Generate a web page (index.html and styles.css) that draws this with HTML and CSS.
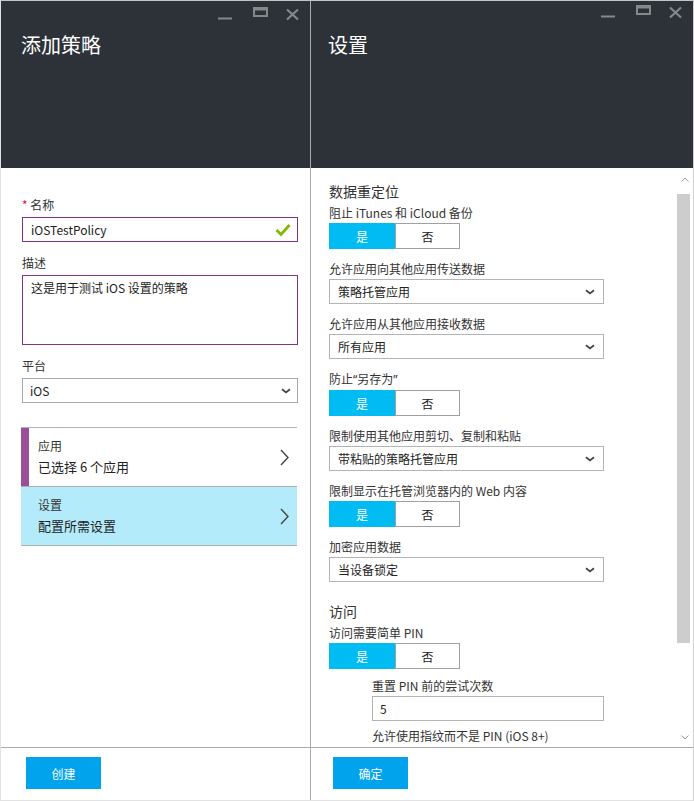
FILE: index.html
```html
<!DOCTYPE html>
<html lang="zh-CN">
<head>
<meta charset="utf-8">
<title>添加策略</title>
<link rel="stylesheet" href="styles.css">
</head>
<body>
<div class="app">
  <section class="panel panel-left">
    <header class="head">
      <div class="ctrls">
        <svg width="82" height="14" viewBox="0 0 82 14">
          <rect x="0" y="10.5" width="14" height="2" fill="#85888c"/>
          <path d="M35 0h15v10h-15z M37 3.5h11v4.5h-11z" fill="#85888c" fill-rule="evenodd"/>
          <path d="M69 2.5L80 12.5M80 2.5L69 12.5" stroke="#85888c" stroke-width="2.2"/>
        </svg>
      </div>
      <h1 class="title">添加策略</h1>
    </header>
    <div class="body-left">
      <div class="lfield">
        <div class="lbl"><span class="req">*</span> 名称</div>
        <div class="inp inp-purple"><span>iOSTestPolicy</span>
          <svg class="check" width="16" height="14" viewBox="0 0 16 14"><path d="M1.5 7L6 11.5L14.5 2" fill="none" stroke="#7fba00" stroke-width="2.8"/></svg>
        </div>
      </div>
      <div class="lfield">
        <div class="lbl">描述</div>
        <div class="inp inp-purple textarea">这是用于测试 iOS 设置的策略</div>
      </div>
      <div class="lfield">
        <div class="lbl">平台</div>
        <div class="inp select-l"><span>iOS</span>
          <svg width="10" height="6" viewBox="0 0 10 6"><path d="M1 1.2L5 4.4L9 1.2" fill="none" stroke="#444" stroke-width="1.8"/></svg>
        </div>
      </div>
      <div class="nav">
        <div class="nav-item">
          <div class="nav-bar"></div>
          <div class="nav-text">
            <div class="nav-lbl">应用</div>
            <div class="nav-val">已选择 6 个应用</div>
          </div>
          <svg class="nav-chev" width="9" height="17" viewBox="0 0 9 17"><path d="M1 1L8 8.5L1 16" fill="none" stroke="#444" stroke-width="1.4"/></svg>
        </div>
        <div class="nav-item nav-active">
          <div class="nav-text nav-text-plain">
            <div class="nav-lbl">设置</div>
            <div class="nav-val">配置所需设置</div>
          </div>
          <svg class="nav-chev" width="9" height="17" viewBox="0 0 9 17"><path d="M1 1L8 8.5L1 16" fill="none" stroke="#444" stroke-width="1.4"/></svg>
        </div>
      </div>
    </div>
    <footer class="foot foot-left"><button class="btn">创建</button></footer>
  </section>

  <section class="panel panel-right">
    <header class="head head-right">
      <div class="ctrls">
        <svg width="82" height="14" viewBox="0 0 82 14">
          <rect x="0" y="10.5" width="14" height="2" fill="#85888c"/>
          <path d="M35 0h15v10h-15z M37 3.5h11v4.5h-11z" fill="#85888c" fill-rule="evenodd"/>
          <path d="M69 2.5L80 12.5M80 2.5L69 12.5" stroke="#85888c" stroke-width="2.2"/>
        </svg>
      </div>
      <h1 class="title">设置</h1>
    </header>
    <div class="body-right">
      <div class="content">
        <h2 class="sec">数据重定位</h2>
        <div class="rf">
          <div class="lbl">阻止 iTunes 和 iCloud 备份</div>
          <div class="toggle"><span class="on">是</span><span class="off">否</span></div>
        </div>
        <div class="rf">
          <div class="lbl">允许应用向其他应用传送数据</div>
          <div class="sel"><span>策略托管应用</span><svg width="10" height="6" viewBox="0 0 10 6"><path d="M1 1.2L5 4.4L9 1.2" fill="none" stroke="#444" stroke-width="1.8"/></svg></div>
        </div>
        <div class="rf">
          <div class="lbl">允许应用从其他应用接收数据</div>
          <div class="sel"><span>所有应用</span><svg width="10" height="6" viewBox="0 0 10 6"><path d="M1 1.2L5 4.4L9 1.2" fill="none" stroke="#444" stroke-width="1.8"/></svg></div>
        </div>
        <div class="rf rf-gap">
          <div class="lbl">防止<span class="q">“</span>另存为<span class="q">”</span></div>
          <div class="toggle"><span class="on">是</span><span class="off">否</span></div>
        </div>
        <div class="rf">
          <div class="lbl">限制使用其他应用剪切、复制和粘贴</div>
          <div class="sel"><span>带粘贴的策略托管应用</span><svg width="10" height="6" viewBox="0 0 10 6"><path d="M1 1.2L5 4.4L9 1.2" fill="none" stroke="#444" stroke-width="1.8"/></svg></div>
        </div>
        <div class="rf">
          <div class="lbl">限制显示在托管浏览器内的 Web 内容</div>
          <div class="toggle"><span class="on">是</span><span class="off">否</span></div>
        </div>
        <div class="rf">
          <div class="lbl">加密应用数据</div>
          <div class="sel"><span>当设备锁定</span><svg width="10" height="6" viewBox="0 0 10 6"><path d="M1 1.2L5 4.4L9 1.2" fill="none" stroke="#444" stroke-width="1.8"/></svg></div>
        </div>
        <h2 class="sec sec-gap">访问</h2>
        <div class="rf">
          <div class="lbl">访问需要简单 PIN</div>
          <div class="toggle"><span class="on">是</span><span class="off">否</span></div>
        </div>
        <div class="rf sub sub-tight">
          <div class="lbl">重置 PIN 前的尝试次数</div>
          <div class="sel sel-sub"><span>5</span></div>
        </div>
        <div class="rf sub">
          <div class="lbl">允许使用指纹而不是 PIN (iOS 8+)</div>
        </div>
      </div>
      <div class="scrollbar">
        <div class="sb-up"><svg width="8" height="5" viewBox="0 0 8 5"><path d="M0.5 4.5L4 1L7.5 4.5" fill="none" stroke="#9a9a9a" stroke-width="1"/></svg></div>
        <div class="sb-thumb"></div>
        <div class="sb-track"></div>
        <div class="sb-down"><svg width="8" height="5" viewBox="0 0 8 5"><path d="M0.5 0.5L4 4L7.5 0.5" fill="none" stroke="#9a9a9a" stroke-width="1"/></svg></div>
      </div>
    </div>
    <footer class="foot foot-right"><button class="btn">确定</button></footer>
  </section>
</div>
</body>
</html>
```
FILE: styles.css
```css
* { box-sizing: border-box; }
html, body { margin: 0; padding: 0; background: #fff; }
body { font-family: "Noto Sans CJK SC", "Noto Sans", sans-serif; color: #333; }

.app {
  display: flex;
  width: 694px;
  height: 801px;
  border-top: 1px solid #c4c4c4;
  border-left: 1px solid #e2e2e2;
  border-right: 1px solid #d0d0d0;
  border-bottom: 1px solid #e2e2e2;
  overflow: hidden;
}

.panel { display: flex; flex-direction: column; height: 100%; }
.panel-left { width: 310px; flex: none; border-right: 1px solid #ababab; }
.panel-right { flex: 1; min-width: 0; }

.head {
  height: 167px;
  flex: none;
  background: #2d3239;
  padding: 6px 10px 0 20px;
}
.head-right { padding: 4px 10px 0 17px; }
.ctrls { display: flex; justify-content: flex-end; height: 14px; }
.ctrls svg { display: block; }
.title {
  margin: 11px 0 0;
  font-size: 20px;
  line-height: 26px;
  font-weight: normal;
  color: #fff;
}
.head-right .title { margin-top: 13px; }

/* left body */
.body-left { flex: 1; min-height: 0; overflow: hidden; padding: 29px 12px 0 21px; }
.lfield { margin-bottom: 13px; }
.lbl { font-size: 12px; line-height: 16px; color: #333; margin-bottom: 4px; white-space: nowrap; }
.req { color: #e81123; }
.q { font-family: "Noto Sans", sans-serif; }
.inp {
  height: 25px;
  border: 1px solid #a8a8a8;
  display: flex;
  align-items: center;
  justify-content: space-between;
  padding: 0 7px 0 8px;
  font-size: 12px;
  color: #222;
}
.inp-purple { border-color: #83308f; }
.check { margin-right: -1px; }
.textarea { height: 70px; align-items: flex-start; padding-top: 4px; line-height: 16px; }
.select-l { padding: 0 6px 0 7px; }

.nav { margin: 24px 0 0 -1px; width: 276px; }
.nav-item {
  display: flex;
  align-items: center;
  height: 59px;
  border-top: 1px solid #b0b0b0;
  padding-right: 8px;
}
.nav-bar { width: 8px; align-self: stretch; background: #9b4f96; }
.nav-text { flex: 1; padding-left: 9px; }
.nav-text-plain { padding-left: 17px; }
.nav-lbl { font-size: 12px; line-height: 16px; color: #333; }
.nav-val { font-size: 13px; line-height: 18px; color: #222; margin-top: 4px; }
.nav-active { background: #b4ebfa; border-bottom: 1px solid #b0b0b0; height: 60px; }
.nav-chev { display: block; }

/* footer */
.foot { height: 53px; flex: none; border-top: 1px solid #ababab; padding: 9px 0 0 25px; }
.foot-right { padding-left: 22px; }
.btn {
  display: block;
  width: 75px;
  height: 32px;
  border: 0;
  background: #00a3ec;
  color: #fff;
  font-family: inherit;
  font-size: 12px;
  padding: 0;
}

/* right body */
.body-right { flex: 1; min-height: 0; display: flex; }
.content { flex: 1; min-width: 0; overflow: hidden; padding: 13px 0 0 18px; }
.sec { margin: 0 0 4px; font-size: 14px; line-height: 20px; font-weight: normal; color: #333; }
.sec-gap { margin-top: 19px; }
.rf { margin-bottom: 12px; }
.rf .lbl { margin-bottom: 2px; }
.rf-gap { margin-top: 3px; }
.toggle { display: flex; width: 131px; height: 26px; font-size: 12px; }
.toggle span { display: flex; align-items: center; justify-content: center; }
.on { width: 66px; background: #00bcf2; color: #fff; }
.off { width: 65px; border: 1px solid #a0a0a0; color: #222; }
.sel {
  width: 275px;
  height: 25px;
  border: 1px solid #b4b4b4;
  display: flex;
  align-items: center;
  justify-content: space-between;
  padding: 0 8px 0 8px;
  font-size: 12px;
  color: #222;
}
.sel svg { display: block; }
.sub { margin-left: 43px; }
.sub-tight { margin-top: -3px; margin-bottom: 7px; }
.sel-sub { width: 232px; padding-left: 7px; }

.scrollbar { width: 17px; flex: none; display: flex; flex-direction: column; }
.sb-up { height: 26px; display: flex; justify-content: center; padding-top: 9px; }
.sb-thumb { height: 449px; margin: 0 3px 0 1px; background: #cdcdcd; }
.sb-track { flex: 1; }
.sb-down { height: 18px; display: flex; justify-content: center; padding-top: 6px; }
.sb-up svg, .sb-down svg { display: block; }
```
